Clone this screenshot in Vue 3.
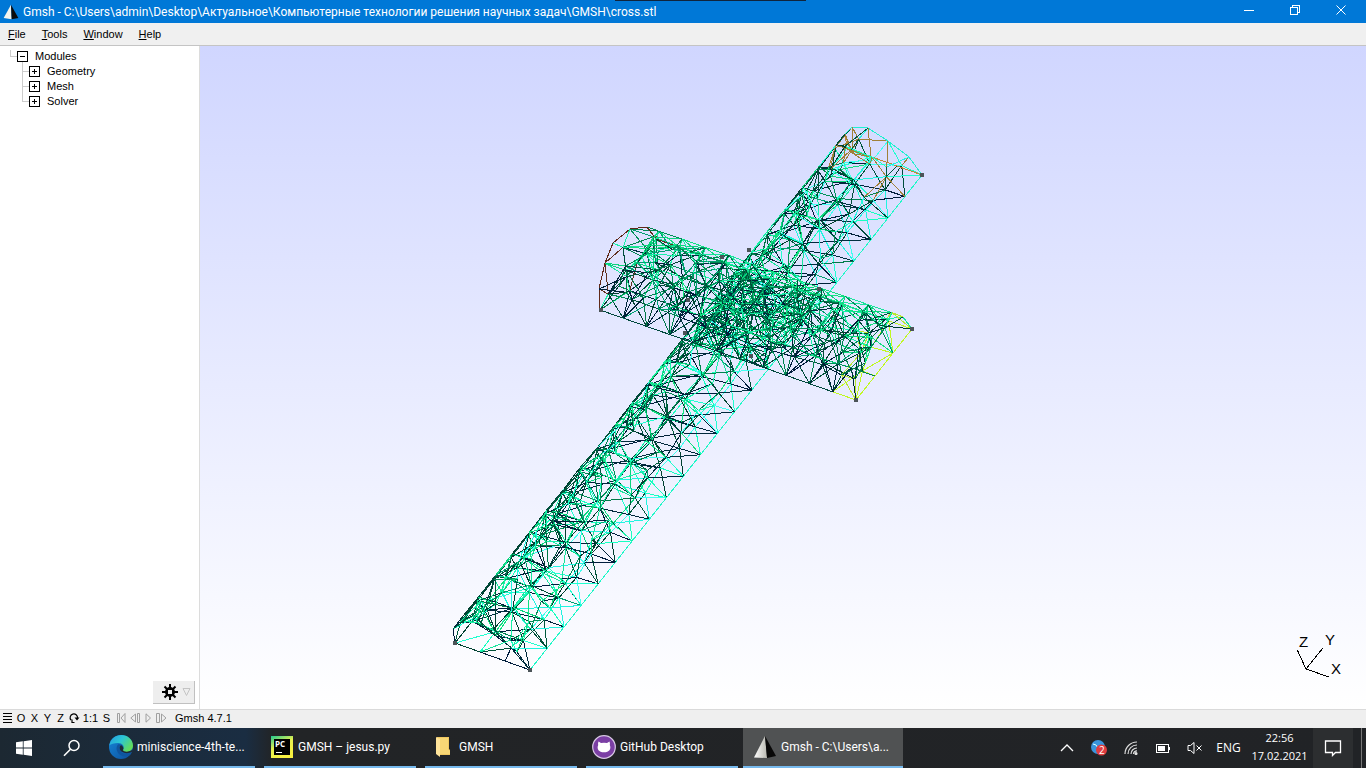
<script setup>
import { ref } from 'vue'

const modules = [
  { name: 'Geometry', last: false },
  { name: 'Mesh', last: false },
  { name: 'Solver', last: true },
]
const menus = [
  ['F', 'ile'],
  ['T', 'ools'],
  ['W', 'indow'],
  ['H', 'elp'],
]
const tasks = [
  { icon: 'edge', label: 'miniscience-4th-te...' },
  { icon: 'pycharm', label: 'GMSH – jesus.py' },
  { icon: 'folder', label: 'GMSH' },
  { icon: 'github', label: 'GitHub Desktop' },
  { icon: 'gmsh', label: 'Gmsh - C:\\Users\\a...', active: true },
]
const title =
  'Gmsh - C:\\Users\\admin\\Desktop\\Актуальное\\Компьютерные технологии решения научных задач\\GMSH\\cross.stl'

// Small seeded generator keeps the mesh identical between renders.
let seed = 20210217
function rnd() {
  seed = (seed * 1664525 + 1013904223) % 4294967296
  return seed / 4294967296
}
const pick = (list) => list[Math.floor(rnd() * list.length)]

const NAVY = ['#002038', '#001c3c', '#003040', '#00283c']
const DARK = ['#004030', '#005038', '#00583c', '#004c3c']
const MID = ['#008450', '#009058', '#007848', '#00a070']
const BRIGHT = ['#10e080', '#18e49c', '#08d47c', '#18f0a8']
const CYAN = ['#20ffd0', '#20f4e0', '#18ffc0', '#40fff0']

// Rows marked true are shifted by half an element along the bar.
const STAGGER = [false, true, false, true, false, true, false, false, true]

function buildBar({ origin, dir, steps, arc, base, inner, spokes, reach, colour }) {
  const rows = [...arc, ...base.slice().reverse()]
  const n = rows.length
  const grid = rows.map(([ox, oy], r) => {
    const count = STAGGER[r] ? steps + 2 : steps + 1
    return Array.from({ length: count }, (_, k) => {
      const u = Math.min(Math.max(STAGGER[r] ? k - 0.5 : k, 0), steps)
      const fixed = r === 0 || r === 6 || u === 0 || u === steps
      const j = fixed ? 0 : r >= 4 && r <= 5 ? 1 : 5
      const t = u / steps
      return {
        x: origin[0] + dir[0] * t + ox + (rnd() - 0.5) * j,
        y: origin[1] + dir[1] * t + oy + (rnd() - 0.5) * j,
        t,
        r,
      }
    })
  })
  const out = []
  const link = (a, b, kind) => {
    if (a && b) out.push({ a, b, stroke: colour(a, b, kind) })
  }
  for (let r = 0; r < n; r++) {
    const next = grid[(r + 1) % n]
    const shift = STAGGER[r] ? -1 : 1
    for (let k = 0; k < grid[r].length; k++) {
      link(grid[r][k], grid[r][k + 1], r === 0 ? 'rim' : 'skin')
      link(grid[r][k], next[k], 'skin')
      link(grid[r][k], next[k + shift], 'skin')
    }
  }
  const nodes = grid.flat()
  for (let k = 0; k < steps; k++) {
    for (const [ox, oy] of inner) {
      const t = (k + 0.3 + rnd() * 0.4) / steps
      const c = {
        x: origin[0] + dir[0] * t + ox + (rnd() - 0.5) * 6,
        y: origin[1] + dir[1] * t + oy + (rnd() - 0.5) * 6,
        t,
        r: 3,
      }
      const near = nodes.filter((q) => Math.hypot(q.x - c.x, q.y - c.y) < reach)
      for (let i = 0; i < spokes; i++) link(c, pick(near), 'inner')
    }
  }
  return out
}

const shaft = buildBar({
  origin: [530, 670],
  dir: [392, -495],
  steps: 23,
  arc: [[0, 0], [-13, -18], [-34, -34], [-54, -47], [-70, -48], [-77, -41], [-75, -27]],
  base: [[-25, -9], [-50, -18]],
  inner: [[-28, -16], [-46, -26], [-58, -34], [-66, -36], [-70, -40]],
  spokes: 8,
  reach: 33,
  colour(a, b, kind) {
    if (kind === 'rim') return '#20f8c8'
    const dx = Math.abs(a.x - b.x)
    const dy = Math.abs(a.y - b.y)
    const p = rnd()
    const left = a.r >= 3 && b.r >= 3 && a.r <= 6 && b.r <= 6
    if (a.t > 0.99 && b.t > 0.99) return a.r <= 6 && b.r <= 6 && a.r + b.r < 10 ? '#20f0d0' : '#c08838'
    if (a.t > 0.97 || b.t > 0.97) return p < 0.45 ? '#a08038' : pick(p < 0.7 ? DARK : CYAN)
    if (a.t < 0.04 && b.t < 0.04 && kind === 'skin') return p < 0.8 ? pick(NAVY) : pick(DARK)
    if (kind === 'skin' && left && a.r > 3) return p < 0.8 ? pick(DARK) : pick(BRIGHT)
    if (kind === 'inner') {
      if (dx > dy * 2.5) return p < 0.35 ? pick(NAVY) : pick(p < 0.7 ? BRIGHT : MID)
      return p < 0.38 ? pick(BRIGHT) : p < 0.66 ? pick(DARK) : p < 0.86 ? pick(MID) : pick(CYAN)
    }
    if (dx > dy * 2) return p < 0.7 ? pick(NAVY) : p < 0.8 ? pick(MID) : pick(CYAN)
    if (a.r <= 1 && b.r <= 1) return p < 0.75 ? pick(CYAN) : pick(DARK)
    return p < 0.32 ? pick(CYAN) : p < 0.44 ? pick(BRIGHT) : p < 0.76 ? pick(DARK) : pick(NAVY)
  },
})

const beam = buildBar({
  origin: [600, 310],
  dir: [256, 90],
  steps: 11,
  arc: [[0, 0], [-1, -21], [5, -47], [13, -67], [30, -81], [47, -83], [56, -71]],
  base: [[19, -24], [37, -47]],
  inner: [[8, -26], [20, -36], [26, -56], [42, -68], [14, -48], [34, -70]],
  spokes: 9,
  reach: 34,
  colour(a, b, kind) {
    const p = rnd()
    const baseRow = (q) => q.r === 0 || q.r >= 6
    if (a.t < 0.01 && b.t < 0.01) return baseRow(a) && baseRow(b) ? pick(DARK) : '#602818'
    if (kind === 'skin' && (a.t < 0.03 || b.t < 0.03)) return p < 0.35 ? '#603020' : p < 0.7 ? pick(MID) : pick(BRIGHT)
    if (baseRow(a) && baseRow(b) && a.t > 0.9 && b.t > 0.9) return '#c0f820'
    if (kind === 'skin' && a.t > 0.92 && b.t > 0.92 && p < 0.5) return '#b8e830'
    if (kind === 'rim') return '#00483c'
    if (kind === 'skin' && a.r >= 4 && b.r >= 4 && a.r <= 6 && b.r <= 6) return p < 0.85 ? pick(BRIGHT) : pick(MID)
    if (a.r <= 1 || b.r <= 1) return p < 0.4 ? pick(NAVY) : p < 0.75 ? pick(DARK) : pick(MID)
    return p < 0.38 ? pick(MID) : p < 0.66 ? pick(BRIGHT) : p < 0.9 ? pick(DARK) : pick(NAVY)
  },
})

// Finer elements where the two bars meet, on a jittered 7 x 7 lattice.
const hubs = Array.from({ length: 49 }, (_, i) => {
  const u = ((i % 7) + rnd() * 0.8) / 7
  const v = (Math.floor(i / 7) + rnd() * 0.8) / 7
  return { x: 688 + u * 62 + v * 80, y: 338 - u * 80 + v * 36 }
})
const joint = []
hubs.forEach((a, i) => {
  hubs.slice(i + 1).forEach((b) => {
    if (Math.hypot(a.x - b.x, a.y - b.y) < 23) {
      joint.push({ a, b, stroke: pick([...BRIGHT, ...MID, ...MID, ...DARK, '#18f0c0']) })
    }
  })
})

const segments = ref([...joint, ...shaft, ...beam])
const corners = [
  [455, 643], [530, 670], [922, 175], [749, 250], [601, 310], [912, 329],
  [856, 400], [722, 257], [819, 289], [688, 300], [685, 333], [751, 356],
]
</script>

<template>
  <div class="desktop">
    <header class="titlebar">
      <svg class="app-icon" width="16" height="16" viewBox="0 0 24 24">
        <path d="M12 1 1 21 13 23z" fill="#f4f4ee" />
        <path d="M12 1 13 23 23 21z" fill="#0b0b0b" />
      </svg>
      <h1 class="title">{{ title }}</h1>
      <div class="window-buttons">
        <button aria-label="Minimize">
          <svg width="12" height="12" shape-rendering="crispEdges"><path d="M1 6.5h10" /></svg>
        </button>
        <button aria-label="Restore">
          <svg width="12" height="12" shape-rendering="crispEdges"><path d="M1.5 3.5h7v7h-7zM3.5 3V1.5h7v7H9" /></svg>
        </button>
        <button aria-label="Close">
          <svg width="12" height="12"><path d="M1.5 1.5l9 9M10.500 1.500l-9 9" /></svg>
        </button>
      </div>
      <span class="top-strip"></span>
    </header>

    <nav class="menubar">
      <button v-for="m in menus" :key="m[0]"><u>{{ m[0] }}</u>{{ m[1] }}</button>
    </nav>

    <main class="workspace">
      <aside class="sidebar">
        <ul class="tree">
          <li>
            <button>
              <svg width="35" height="15" shape-rendering="crispEdges">
                <path class="guide" d="M10.500 1v6.500H17M22.500 13v2" />
                <path class="box" d="M17.500 2.500h10v10h-10zM20 7.500h5" />
              </svg>Modules
            </button>
          </li>
          <li v-for="m in modules" :key="m.name">
            <button>
              <svg width="47" height="15" shape-rendering="crispEdges">
                <path class="guide" :d="m.last ? 'M22.500 0v7.500H29' : 'M22.500 0v15M22 7.500h7'" />
                <path class="box" d="M29.500 2.500h10v10h-10zM32 7.500h5M34.500 5v5" />
              </svg>{{ m.name }}
            </button>
          </li>
        </ul>
        <button class="gear" aria-label="Options">
          <svg width="16" height="16" viewBox="0 0 16 16">
            <path d="M8 0v16M0 8h16M2.500 2.500l11 11M13.500 2.500l-11 11" stroke="#000" stroke-width="2" />
            <circle cx="8" cy="8" r="5" fill="#000" />
            <path d="M6 6h4v4H6z" fill="#eee" />
          </svg>
          <svg width="9" height="8" viewBox="0 0 9 8"><path d="M1 .5h7L4.500 7.500z" fill="none" stroke="#c4c4c4" /></svg>
        </button>
      </aside>

      <svg class="scene" viewBox="200 46 1166 663" role="img" aria-label="Mesh of cross.stl">
        <g shape-rendering="crispEdges">
          <line
            v-for="(s, i) in segments"
            :key="i"
            :x1="s.a.x"
            :y1="s.a.y"
            :x2="s.b.x"
            :y2="s.b.y"
            :stroke="s.stroke"
          />
          <rect v-for="(c, i) in corners" :key="'c' + i" :x="c[0] - 2" :y="c[1] - 2" width="4" height="4" fill="#4c5458" />
          <path d="M1297.500 650.500l8.500 18.500L1322.500 648.500M1306 669l23 8" fill="none" stroke="#000" />
        </g>
        <g class="axis-names">
          <text x="1299" y="647">Z</text>
          <text x="1325" y="645">Y</text>
          <text x="1331" y="674">X</text>
        </g>
      </svg>
    </main>

    <footer class="statusbar">
      <button class="w13" aria-label="Menu">
        <svg width="9" height="10" shape-rendering="crispEdges"><path d="M0 .5h9M0 3.500h9M0 6.500h9M0 9.500h9" stroke="#000" /></svg>
      </button>
      <button class="w14">O</button>
      <button class="w13">X</button>
      <button class="w13">Y</button>
      <button class="w13">Z</button>
      <button class="w14" aria-label="Rotate">
        <svg width="12" height="12" viewBox="0 0 12 12"><path d="M3 8A3.700 3.700 0 1 1 9.500 6M4 7.500v3h2.500" fill="none" stroke="#000" stroke-width="1.200" /><path d="M6.500 5.500h5L9 8.500z" /></svg>
      </button>
      <button class="w19">1:1</button>
      <button class="w13">S</button>
      <span class="player">
        <button class="w13" aria-label="First"><svg width="9" height="10"><path d="M.5.5h2v9h-2zM8 .5v9L4 5z" /></svg></button>
        <button class="w14" aria-label="Back"><svg width="10" height="10"><path d="M5.500 1v8L.8 5zM7.500.5h2v9h-2z" /></svg></button>
        <button class="w13" aria-label="Play"><svg width="7" height="10"><path d="M1 .8v8.400L5.500 5z" /></svg></button>
        <button class="w13" aria-label="Forward"><svg width="11" height="10"><path d="M.5.5h3v9h-3zM5.500 1v8L10 5z" /></svg></button>
      </span>
      <span class="version">Gmsh 4.7.1</span>
    </footer>

    <section class="taskbar">
      <button class="start" aria-label="Start">
        <svg width="16" height="16" viewBox="0 0 16 16" fill="#fff"><path d="M0 2.300 6.800 1.300v6.300H0zM7.600 1.200 16 0v7.600H7.600zM0 8.400h6.800v6.300L0 13.700zM7.600 8.400H16V16l-8.400-1.200z" /></svg>
      </button>
      <button class="search" aria-label="Search">
        <svg width="18" height="18" fill="none" stroke="#fff" stroke-width="1.500"><circle cx="11" cy="6.500" r="5" /><path d="M7.500 10.200 1 16.800" /></svg>
      </button>
      <button v-for="t in tasks" :key="t.label" class="task" :class="{ active: t.active }">
        <span class="task-icon">
          <svg v-if="t.icon === 'edge'" width="24" height="24" viewBox="0 0 24 24">
            <defs>
              <linearGradient id="edgeTop" x1="0" y1="0" x2="1" y2=".6"><stop offset="0" stop-color="#249ae0" /><stop offset=".5" stop-color="#2cc6d4" /><stop offset="1" stop-color="#64dc58" /></linearGradient>
              <linearGradient id="edgeLow" x1="0" y1="0" x2="1" y2="1"><stop offset="0" stop-color="#1686d8" /><stop offset="1" stop-color="#0c4f9c" /></linearGradient>
            </defs>
            <circle cx="12" cy="12" r="12" fill="url(#edgeLow)" />
            <path d="M.3 10.500C1.500 4 6.500 0 12.300 0 19 0 24 5 24 10.500c0 4-3 6.500-6.600 6.500-3 0-4.300-1-3.300-2.700 1.800-3-.8-6.300-5-6.300-4 0-7.400 1-8.800 2.500z" fill="url(#edgeTop)" />
            <path d="M9 9.500c-3.500 3.500-.5 11 6 12 3 .4 6-1 7.500-3.500-5 2-11 .5-12-4-.3-2 .3-3.500 1.500-4.300-.8-.5-2-.7-3-.2z" fill="#0f559f" />
            <path d="M12 10c-2 1.500-1.800 5 .8 6.800 3 2 7.400 1.800 10.700-.3L22 20c2-2 2-5 1.500-5.500C21 17 14.500 17.500 14 15c.8-1 1-3-2-5z" fill="#1e2b36" />
          </svg>
          <svg v-else-if="t.icon === 'pycharm'" width="22" height="22" viewBox="0 0 22 22">
            <defs><linearGradient id="pyc" x1="0" y1="0" x2=".5" y2="1"><stop offset="0" stop-color="#20c890" /><stop offset=".5" stop-color="#e4f050" /><stop offset="1" stop-color="#f8f040" /></linearGradient></defs>
            <path d="M0 0h22v22H0z" fill="url(#pyc)" /><path d="M3 3h16v16H3z" fill="#000" />
            <text x="4" y="11" class="pc">PC</text><path d="M5 16.500h6" stroke="#fff" stroke-width="1" />
          </svg>
          <svg v-else-if="t.icon === 'folder'" width="16" height="22" viewBox="0 0 16 22">
            <path d="M2 1h12v12l1 1v5H3z" fill="#f0c860" /><path d="M4 2h9v11l2 2v3H5z" fill="#f8d775" /><path d="M1 1l4 2v18l-4-3z" fill="#ffe49a" />
          </svg>
          <svg v-else-if="t.icon === 'github'" width="24" height="24" viewBox="0 0 24 24">
            <circle cx="12" cy="12" r="11.300" fill="#7b3fa4" stroke="#d8c8e4" stroke-width="1.200" />
            <path d="M6.500 6.500 9 8q3-.7 6 0l2.500-1.500q.8 2 .3 3.500c1.800 4-.6 7.300-5.800 7.300S4.400 14 6.200 10q-.5-1.500.3-3.500z" fill="#fff" />
          </svg>
          <svg v-else width="24" height="24" viewBox="0 0 24 24">
            <defs><linearGradient id="gm"><stop offset="0" stop-color="#fff" /><stop offset="1" stop-color="#b8b8b0" /></linearGradient></defs>
            <path d="M12 1 1 22.500 14 23z" fill="url(#gm)" /><path d="M12 1 14 23 23 21z" fill="#080808" />
          </svg>
        </span>
        <span>{{ t.label }}</span>
      </button>

      <div class="tray">
        <button aria-label="Hidden icons"><svg width="14" height="8" fill="none" stroke="#fff" stroke-width="1.300"><path d="M1 7l6-6 6 6" /></svg></button>
        <button aria-label="Messages">
          <svg width="18" height="18" viewBox="0 0 18 18"><circle cx="8" cy="8" r="7" fill="#3994dc" /><path d="M3 5l3 1 2 3" stroke="#dff" fill="none" /><circle cx="11.500" cy="11" r="5.500" fill="#e03c40" /><text x="9" y="15" class="badge">2</text></svg>
        </button>
        <button aria-label="Network">
          <svg width="14" height="14" fill="none" stroke="#ddd" stroke-width="1.200"><path d="M1 13A12 12 0 0 1 13 1M4 13A9 9 0 0 1 13 4M7 13A6 6 0 0 1 13 7M9.500 13A3.500 3.500 0 0 1 13 9.800" /><circle cx="12" cy="12.500" r="1" fill="#fff" /></svg>
        </button>
        <button aria-label="Battery">
          <svg width="16" height="10" shape-rendering="crispEdges"><path d="M1.500 1.500h12v8h-12zM14.500 4v3" fill="none" stroke="#fff" /><path d="M3 3h7v5H3z" fill="#fff" /></svg>
        </button>
        <button aria-label="Sound muted">
          <svg width="16" height="14" fill="none" stroke="#fff"><path d="M1 4.500h2.500L7 1.500v11L3.500 9.500H1zM9.500 4.500l5 5M14.500 4.500l-5 5" /></svg>
        </button>
        <button class="lang">ENG</button>
        <button class="clock"><span>22:56</span><span>17.02.2021</span></button>
        <button class="notify" aria-label="Notifications">
          <svg width="18" height="18" fill="none" stroke="#fff" stroke-width="1.300"><path d="M1.500 2h15v11.500h-5L8.500 16.500V13.500h-7z" /></svg>
        </button>
        <button class="peek" aria-label="Show desktop"></button>
      </div>
    </section>
  </div>
</template>

<style>
body { overflow: hidden; }
</style>

<style scoped>
.desktop {
  display: flex;
  flex-direction: column;
  height: 100vh;
  font: 11px/15px "Liberation Sans", Arial, sans-serif;
  color: #000;
  background: #efefef;
}
button { border: 0; padding: 0; margin: 0; background: none; font: inherit; color: inherit; }
svg { display: block; flex: none; }

.titlebar { position: relative; display: flex; align-items: center; height: 23px; background: #0078d7; color: #fff; }
.app-icon { margin: 0 4px 0 3px; }
.title { flex: 1; margin: 0; font: 12px/24px Roboto, "Noto Sans", sans-serif; white-space: nowrap; }
.window-buttons { display: flex; align-self: stretch; padding-right: 2px; }
.window-buttons button { width: 46px; display: flex; align-items: center; justify-content: center; padding-bottom: 3px; }
.window-buttons path { fill: none; stroke: #fff; }
.top-strip { position: absolute; top: 0; left: 45%; width: 14%; height: 1px; background: #10243c; }

.menubar { display: flex; gap: 16px; height: 22px; padding-left: 8px; border-bottom: 1px solid #c4c4c4; background: #f0f0f0; }
.menubar button { line-height: 22px; }

.workspace { flex: 1; min-height: 0; display: flex; }
.sidebar { box-sizing: border-box; width: 200px; flex: none; display: flex; flex-direction: column; justify-content: space-between; background: #fff; border-right: 1px solid #dcdcdc; }
.tree { list-style: none; margin: 0; padding: 3px 0 0; }
.tree button { display: flex; height: 15px; line-height: 15px; }
.guide { fill: none; stroke: #ccc; }
.box { fill: none; stroke: #000; }
.gear { align-self: flex-end; display: flex; align-items: center; gap: 4px; width: 42px; height: 23px; margin: 0 4px 5px; padding-left: 9px; background: #eee; border: solid; border-width: 0 1px 1px 0; border-color: #c0c0c0; }
.scene { flex: 1; min-width: 0; height: 100%; background: linear-gradient(#d0d6ff, #fff); }
.axis-names { font: 15px "Liberation Sans", Arial, sans-serif; }

.statusbar { display: flex; align-items: flex-start; height: 18px; padding-left: 1px; border-top: 1px solid #dadada; background: #efefef; line-height: 16px; }
.statusbar button { display: flex; align-items: center; justify-content: center; height: 16px; }
.w13 { width: 13px; }
.w14 { width: 14px; }
.w19 { width: 19px; }
.player { display: flex; padding: 0 7px 0 2px; }
.player path { fill: none; stroke: #a0a0a0; }

.taskbar { display: flex; height: 40px; background: linear-gradient(90deg, #1c2832, #1a2d42 18%, #222426 20%, #212326); color: #fff; font: 12px/16px "Open Sans", "Noto Sans", sans-serif; }
.start, .search { width: 48px; display: flex; align-items: center; justify-content: center; }
.search { margin-right: 3px; }
.task { width: 152px; margin: 0 5px 0 4px; display: flex; align-items: center; border-bottom: 2px solid #76b9ed; white-space: nowrap; font-family: Roboto, "Noto Sans", sans-serif; }
.task-icon { box-sizing: border-box; width: 34px; display: flex; justify-content: center; padding-left: 2px; }
.task.active { width: 160px; margin: 0; padding-left: 4px; background: #505253; }
.pc { font: bold 8px "Open Sans", sans-serif; fill: #fff; }
.badge { font: 10px "Open Sans", sans-serif; fill: #fff; }
.tray { display: flex; margin-left: auto; }
.tray button { width: 32px; display: flex; align-items: center; justify-content: center; }
.tray .lang { width: 35px; }
.tray .clock { width: 67px; flex-direction: column; line-height: 18px; font-size: 11px; padding-bottom: 2px; }
.tray .notify { width: 40px; background: #2c2e30; }
.tray .peek { width: 5px; margin-left: 8px; border-left: 1px solid #777; }
</style>
